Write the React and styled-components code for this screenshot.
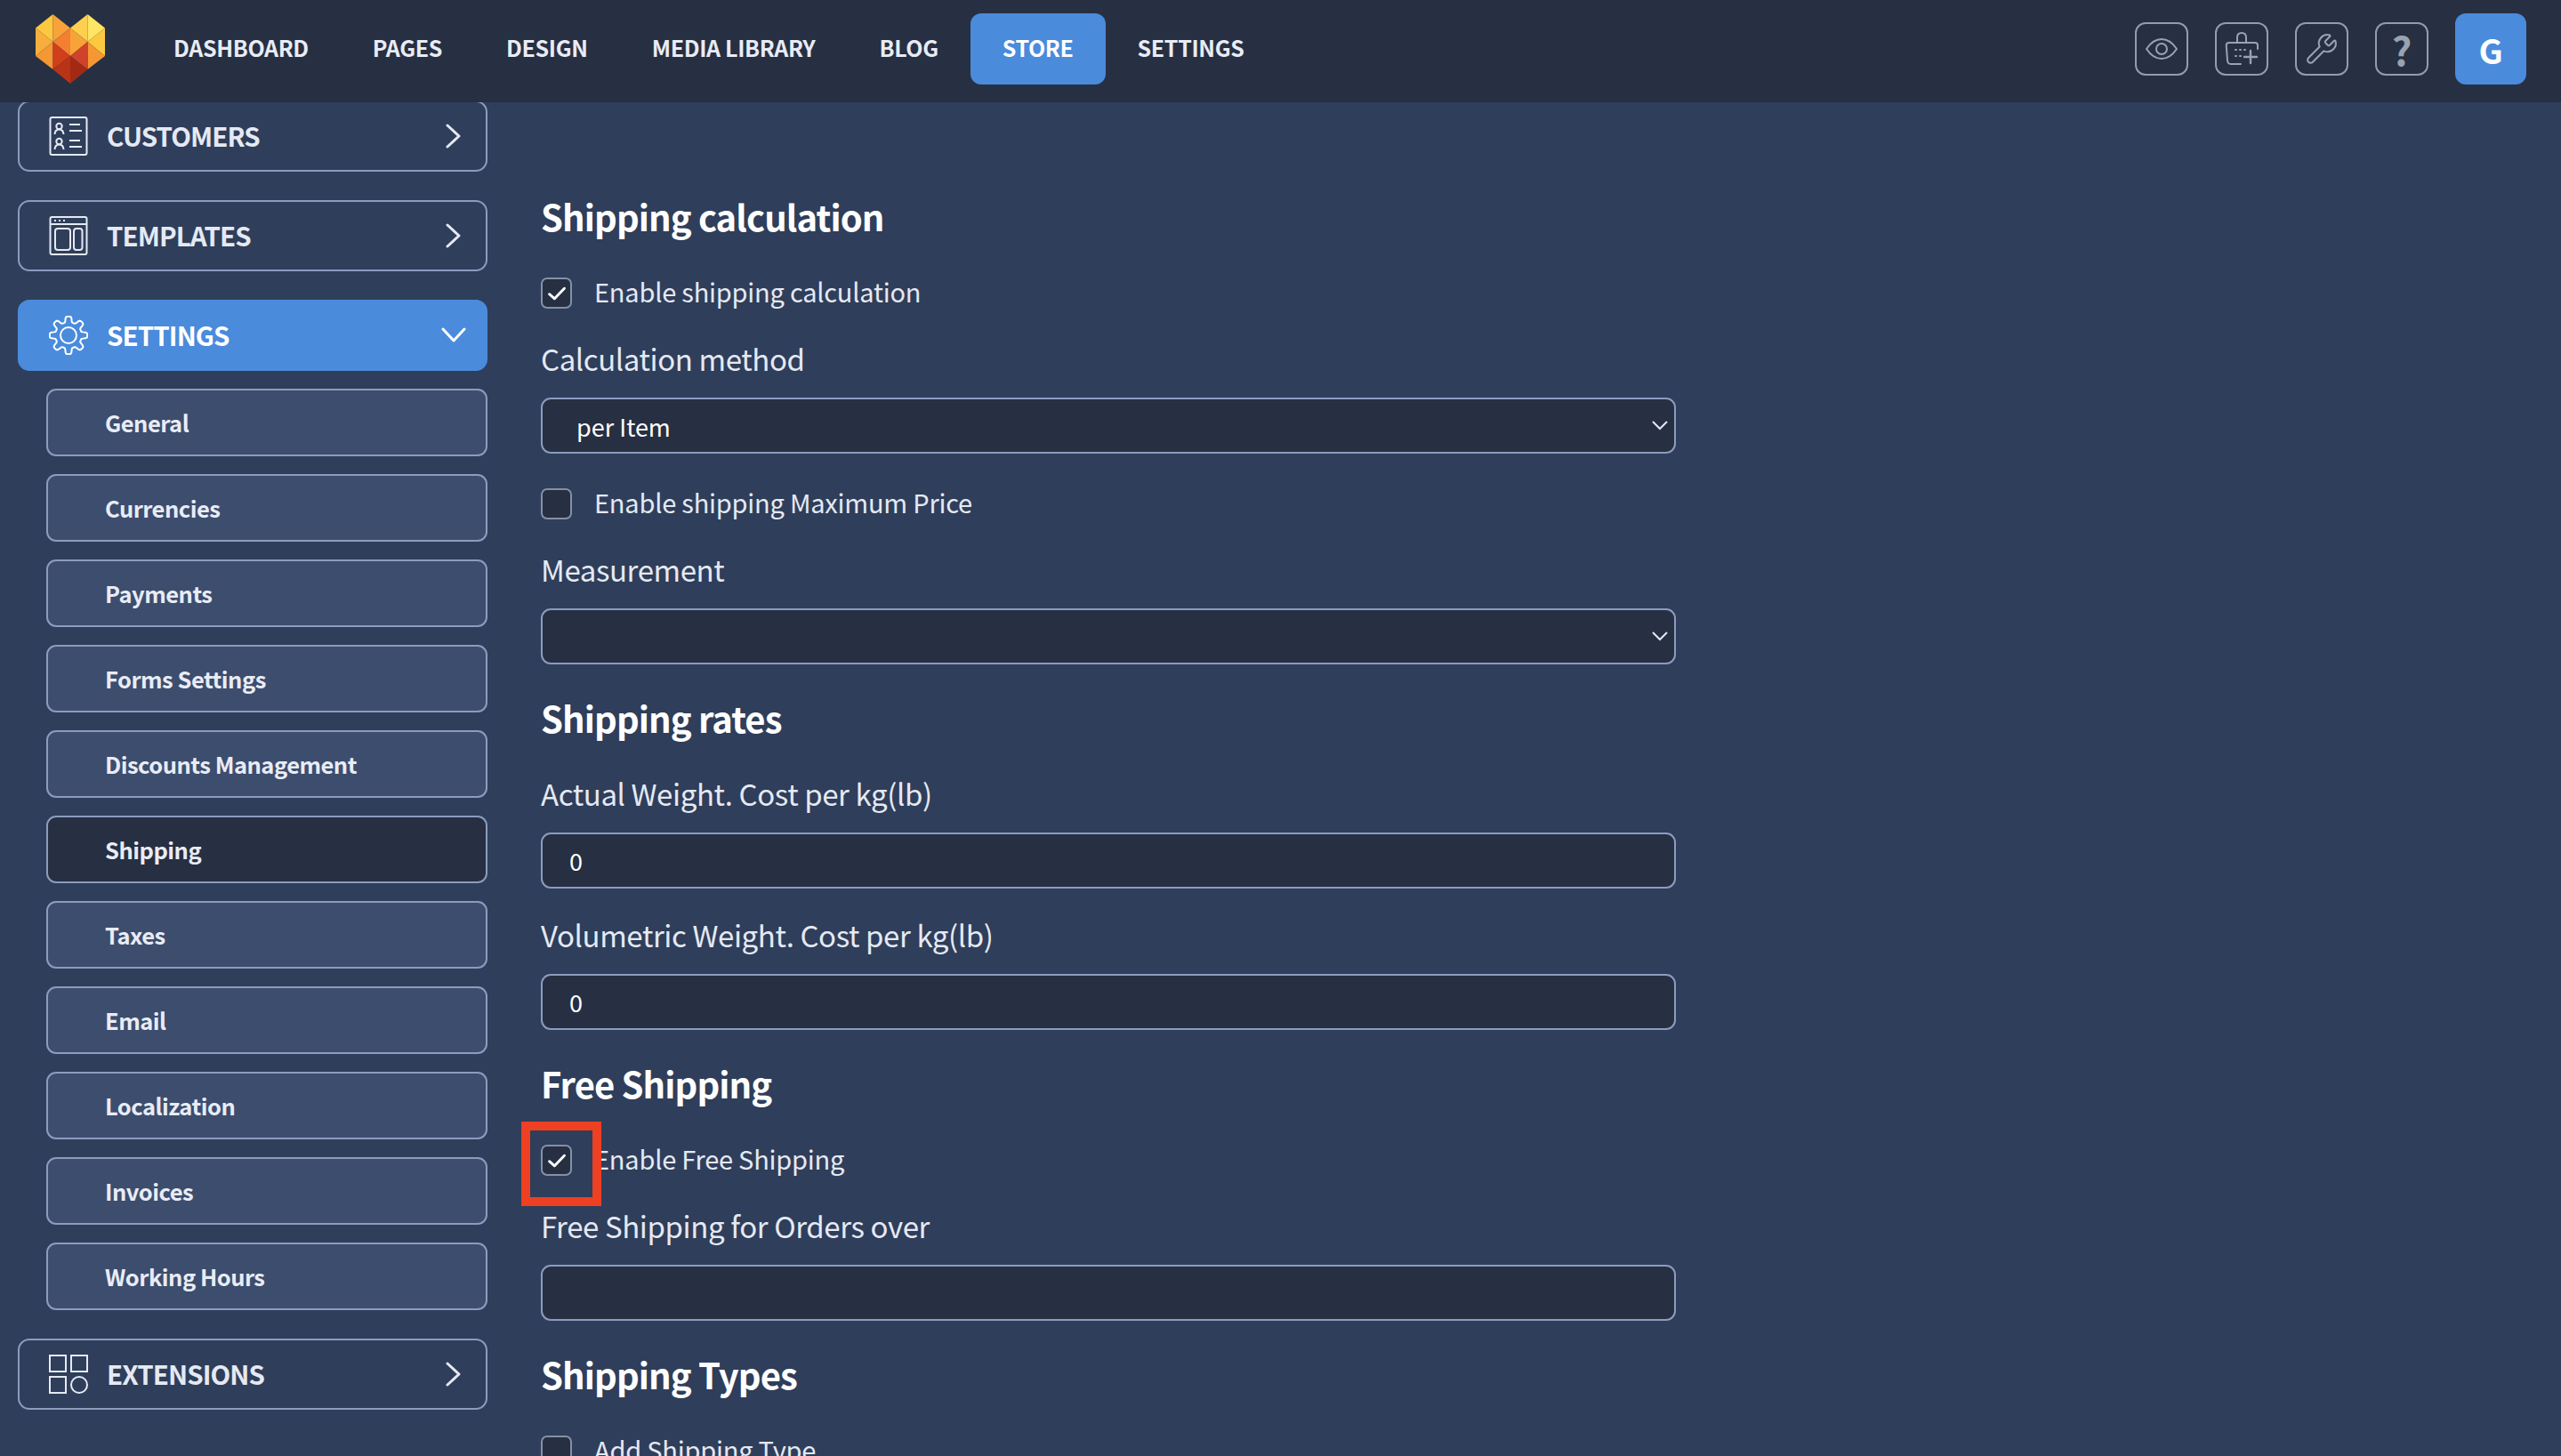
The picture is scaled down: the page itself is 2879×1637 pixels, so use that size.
import styled, { createGlobalStyle } from "styled-components";
import { Wrench } from "lucide-react";

const FONT = `"Noto Sans CJK KR", "Noto Sans", sans-serif`;

const GlobalStyle = createGlobalStyle`
  html, body {
    margin: 0;
    padding: 0;
    background: #2f3e5a;
    font-family: ${FONT};
    overflow: hidden;
  }
  * { box-sizing: border-box; }
`;

const NAV = ["DASHBOARD", "PAGES", "DESIGN", "MEDIA LIBRARY", "BLOG", "STORE", "SETTINGS"];
const SUB = [
  "General", "Currencies", "Payments", "Forms Settings", "Discounts Management",
  "Shipping", "Taxes", "Email", "Localization", "Invoices", "Working Hours",
];

// outline of the gear: eight rounded teeth around the centre
const GEAR_PATH = Array.from({ length: 144 }, (_, i) => {
  const a = (i / 144) * Math.PI * 2;
  const r = 18 + 3.2 * (Math.tanh(2.4 * Math.cos(8 * a)) / Math.tanh(2.4));
  const x = 22 + r * Math.cos(a);
  const y = 22 + r * Math.sin(a);
  return `${i === 0 ? "M" : "L"}${x.toFixed(2)} ${y.toFixed(2)}`;
}).join("") + "Z";

function Logo() {
  return (
    <LogoSvg viewBox="0 0 78 78">
      <polygon points="0,15.5 19.5,0 19.5,31" fill="#fbc840" />
      <polygon points="19.5,0 39,15.5 19.5,31" fill="#f7a339" />
      <polygon points="39,15.5 58.5,0 58.5,31" fill="#fdd04f" />
      <polygon points="58.5,0 78,15.5 58.5,31" fill="#ffe564" />
      <polygon points="0,15.5 19.5,31 0,47" fill="#f8ae3c" />
      <polygon points="0,47 19.5,31 19.5,62" fill="#f59733" />
      <polygon points="19.5,31 39,15.5 39,47" fill="#f47f31" />
      <polygon points="39,15.5 58.5,31 39,47" fill="#f7a339" />
      <polygon points="78,15.5 58.5,31 78,47" fill="#fbc840" />
      <polygon points="78,47 58.5,31 58.5,62" fill="#f59733" />
      <polygon points="19.5,31 39,47 19.5,62" fill="#cf3f1c" />
      <polygon points="58.5,31 39,47 58.5,62" fill="#d0432b" />
      <polygon points="19.5,62 39,47 39,78" fill="#b93417" />
      <polygon points="58.5,62 39,47 39,78" fill="#a22a15" />
    </LogoSvg>
  );
}

function Chevron({ down }) {
  return (
    <ChevronSvg viewBox="0 0 20 30" $down={down}>
      <path d="M3 3l13 12-13 12" />
    </ChevronSvg>
  );
}

function CustomersIcon() {
  return (
    <SideIcon viewBox="0 0 44 44">
      <rect x="1.500" y="1" width="41" height="42" rx="2" />
      <circle cx="11.500" cy="11" r="3.200" />
      <path d="M6.500 20c.3-3.500 2-5.500 5-5.500s4.700 2 5 5.500M23 9h12M23 16h14" />
      <circle cx="11.500" cy="28" r="3.200" />
      <path d="M6.500 37c.3-3.500 2-5.500 5-5.500s4.700 2 5 5.500M23 27h12M23 34h14" />
    </SideIcon>
  );
}

function TemplatesIcon() {
  return (
    <SideIcon viewBox="0 0 44 44">
      <rect x="1.500" y="1" width="41" height="42" rx="2" />
      <path d="M1.500 9h41M6 5h2M11 5h2M16 5h2" />
      <rect x="7" y="14" width="17" height="24" rx="3" />
      <rect x="28" y="14" width="9.500" height="24" rx="3" />
    </SideIcon>
  );
}

function GearIcon() {
  return (
    <SideIcon viewBox="0 0 44 44">
      <circle cx="22" cy="22" r="9" />
      <path d={GEAR_PATH} strokeLinejoin="round" />
    </SideIcon>
  );
}

function ExtensionsIcon() {
  return (
    <SideIcon viewBox="0 0 44 44">
      <rect x="1" y="1" width="18" height="18" />
      <rect x="25" y="1" width="18" height="18" />
      <rect x="1" y="25" width="18" height="18" />
      <circle cx="34" cy="34" r="9" />
    </SideIcon>
  );
}

function EyeIcon() {
  return (
    <TopSvg viewBox="0 0 40 40">
      <path d="M3 20c5-7.500 10.500-11 17-11s12 3.500 17 11c-5 7.500-10.500 11-17 11S8 27.500 3 20z" />
      <circle cx="20" cy="20" r="6" />
    </TopSvg>
  );
}

function BagIcon() {
  return (
    <TopSvg viewBox="0 0 40 40">
      <path d="M38 20v-4c0-2-1-3-3-3H6c-2 0-3.300 1-3.300 3l1.300 17c.2 3 2 4 4 4h11" />
      <path d="M15 13V7c0-3 2-5 5-5s5 2 5 5v6" />
      <path d="M30 22v14M23 29h14" strokeWidth="2.400" />
      <path d="M13 21h1M18 21h1M23 21h1M13 28h1M18 28h1" />
    </TopSvg>
  );
}

function Check() {
  return (
    <CheckSvg viewBox="0 0 20 20">
      <path d="M3.500 10.500l4.500 4L16.500 5.500" />
    </CheckSvg>
  );
}

function CheckField({ checked, marked, children }) {
  return (
    <CheckRow>
      <CheckBox>{checked && <Check />}</CheckBox>
      <CheckLabel>{children}</CheckLabel>
      {marked && <Marker />}
    </CheckRow>
  );
}

function SelectField({ label, value, options }) {
  return (
    <Field>
      <FieldLabel>{label}</FieldLabel>
      <SelectWrap>
        <Select defaultValue={value}>
          {options.map((o) => <option key={o}>{o}</option>)}
        </Select>
        <SelectArrow viewBox="0 0 20 12"><path d="M2 2l8 8 8-8" /></SelectArrow>
      </SelectWrap>
    </Field>
  );
}

function InputField({ label, value }) {
  return (
    <Field>
      <FieldLabel>{label}</FieldLabel>
      <Input defaultValue={value} />
    </Field>
  );
}

export default function App() {
  return (
    <Page>
      <GlobalStyle />
      <TopBar>
        <Logo />
        <Nav>
          {NAV.map((n) => <NavItem key={n} $active={n === "STORE"}>{n}</NavItem>)}
        </Nav>
        <TopActions>
          <TopButton><EyeIcon /></TopButton>
          <TopButton><BagIcon /></TopButton>
          <TopButton><Wrench size={38} strokeWidth={1.3} color="#98a3b1" /></TopButton>
          <TopButton><Question>?</Question></TopButton>
          <Avatar>G</Avatar>
        </TopActions>
      </TopBar>
      <Body>
        <Sidebar>
          <MainItem><CustomersIcon /><MainLabel>CUSTOMERS</MainLabel><Chevron /></MainItem>
          <MainItem><TemplatesIcon /><MainLabel>TEMPLATES</MainLabel><Chevron /></MainItem>
          <MainItem $open><GearIcon /><MainLabel>SETTINGS</MainLabel><Chevron down /></MainItem>
          <SubList>
            {SUB.map((s) => <SubItem key={s} $active={s === "Shipping"}>{s}</SubItem>)}
          </SubList>
          <MainItem><ExtensionsIcon /><MainLabel>EXTENSIONS</MainLabel><Chevron /></MainItem>
        </Sidebar>
        <Content>
          <Heading>Shipping calculation</Heading>
          <CheckField checked>Enable shipping calculation</CheckField>
          <SelectField label="Calculation method" value="per Item" options={["per Item", "per Order"]} />
          <CheckField>Enable shipping Maximum Price</CheckField>
          <SelectField label="Measurement" value="" options={["", "Weight", "Volume"]} />
          <Heading>Shipping rates</Heading>
          <InputField label="Actual Weight. Cost per kg(lb)" value="0" />
          <InputField label="Volumetric Weight. Cost per kg(lb)" value="0" />
          <Heading>Free Shipping</Heading>
          <CheckField checked marked>Enable Free Shipping</CheckField>
          <InputField label="Free Shipping for Orders over" value="" />
          <Heading>Shipping Types</Heading>
          <CheckField>Add Shipping Type</CheckField>
        </Content>
      </Body>
    </Page>
  );
}

const Page = styled.div`
  width: 2879px;
  height: 1637px;
  overflow: hidden;
  background: #2f3e5a;
  display: flex;
  flex-direction: column;
`;

const TopBar = styled.header`
  position: relative;
  z-index: 2;
  flex: none;
  height: 115px;
  background: #272f42;
  display: flex;
  align-items: center;
  padding: 0 39px 5px 40px;
`;

const LogoSvg = styled.svg`
  width: 78px;
  height: 78px;
  flex: none;
`;

const Nav = styled.nav`
  display: flex;
  margin-left: 41px;
`;

const NavItem = styled.a`
  height: 80px;
  padding: 0 36px 4px;
  display: flex;
  align-items: center;
  border-radius: 12px;
  font-size: 25px;
  font-weight: 600;
  letter-spacing: -0.35px;
  color: ${(p) => (p.$active ? "#ffffff" : "#e8ecf5")};
  background: ${(p) => (p.$active ? "#4a8bdc" : "transparent")};
`;

const TopActions = styled.div`
  margin-left: auto;
  display: flex;
  align-items: center;
  gap: 30px;
`;

const TopButton = styled.button`
  width: 60px;
  height: 60px;
  padding: 0;
  border: 2px solid #939daa;
  border-radius: 12px;
  background: transparent;
  display: flex;
  align-items: center;
  justify-content: center;
`;

const TopSvg = styled.svg`
  width: 40px;
  height: 40px;
  fill: none;
  stroke: #98a3b1;
  stroke-width: 2;
  stroke-linecap: round;
`;

const Question = styled.span`
  font-family: ${FONT};
  font-size: 44px;
  font-weight: 700;
  line-height: 1;
  color: #98a3b1;
`;

const Avatar = styled.div`
  width: 80px;
  height: 80px;
  border-radius: 12px;
  background: #4a8bdc;
  color: #fff;
  font-size: 38px;
  font-weight: 700;
  display: flex;
  align-items: center;
  justify-content: center;
`;

const Body = styled.div`
  flex: 1;
  display: flex;
  min-height: 0;
`;

const Sidebar = styled.aside`
  flex: none;
  width: 528px;
  margin: -2px 0 0 20px;
  display: flex;
  flex-direction: column;
  gap: 32px;
`;

const MainItem = styled.div`
  flex: none;
  height: 80px;
  padding: 0 26px 0 33px;
  display: flex;
  align-items: center;
  gap: 21px;
  border-radius: 13px;
  border: 2px solid ${(p) => (p.$open ? "#4a8bdc" : "#8c9cbf")};
  background: ${(p) => (p.$open ? "#4a8bdc" : "transparent")};
  color: ${(p) => (p.$open ? "#ffffff" : "#e5e9f3")};
`;

const SideIcon = styled.svg`
  width: 44px;
  height: 44px;
  flex: none;
  fill: none;
  stroke: currentColor;
  stroke-width: 2;
`;

const MainLabel = styled.span`
  flex: 1;
  padding-bottom: 2px;
  font-size: 29.5px;
  font-weight: 600;
  letter-spacing: -0.9px;
`;

const ChevronSvg = styled.svg`
  width: 20px;
  height: 30px;
  flex: none;
  fill: none;
  stroke: currentColor;
  stroke-width: 3;
  stroke-linecap: round;
  stroke-linejoin: round;
  transform: ${(p) => (p.$down ? "rotate(90deg)" : "none")};
`;

const SubList = styled.div`
  margin: -12px 0 0 32px;
  display: flex;
  flex-direction: column;
  gap: 20px;
`;

const SubItem = styled.div`
  height: 76px;
  padding: 0 0 2px 64px;
  display: flex;
  align-items: center;
  border-radius: 11px;
  border: 2px solid #8c9cbf;
  background: ${(p) => (p.$active ? "#272f42" : "#3d4d6e")};
  color: #e8ecf5;
  font-size: 25.5px;
  font-weight: 600;
  letter-spacing: -0.5px;
`;

const Content = styled.main`
  flex: none;
  width: 1276px;
  margin-left: 60px;
  padding-top: 99px;
`;

const Heading = styled.h2`
  margin: 0 0 40px;
  font-size: 40px;
  line-height: 58px;
  font-weight: 700;
  letter-spacing: -0.9px;
  color: #ffffff;
`;

const Field = styled.div`
  margin-bottom: 31px;
  ${Heading} + & { margin-top: -5px; }
`;

const CheckRow = styled.label`
  position: relative;
  display: flex;
  align-items: center;
  gap: 25px;
  height: 35px;
  margin-bottom: 35px;
  ${Field} + & { margin-top: 39px; }
`;

const CheckBox = styled.span`
  flex: none;
  width: 35px;
  height: 35px;
  border: 2px solid #8491a5;
  border-radius: 7px;
  background: #272f42;
  display: flex;
  align-items: center;
  justify-content: center;
`;

const CheckSvg = styled.svg`
  width: 26px;
  height: 26px;
  fill: none;
  stroke: #ffffff;
  stroke-width: 2.200;
  stroke-linecap: round;
  stroke-linejoin: round;
`;

const CheckLabel = styled.span`
  padding-bottom: 5px;
  font-size: 29px;
  letter-spacing: -0.22px;
  color: #e5e9f3;
`;

const Marker = styled.span`
  position: absolute;
  left: -22px;
  top: -26px;
  width: 90px;
  height: 95px;
  border: 10px solid #ee4022;
`;

const FieldLabel = styled.div`
  margin-bottom: 23px;
  font-size: 33px;
  line-height: 42px;
  letter-spacing: -0.4px;
  color: #e5e9f3;
`;

const controlStyle = `
  display: block;
  width: 100%;
  height: 63px;
  padding: 0 40px 0 30px;
  border: 2px solid #8c9cbf;
  border-radius: 11px;
  background: #272f42;
  color: #ffffff;
  font-family: ${FONT};
  font-size: 27px;
  outline: none;
`;

const Input = styled.input`
  ${controlStyle}
`;

const SelectWrap = styled.div`
  position: relative;
`;

const Select = styled.select`
  ${controlStyle}
  padding-left: 38px;
  padding-top: 2px;
  appearance: none;
`;

const SelectArrow = styled.svg`
  position: absolute;
  right: 8px;
  top: 25px;
  width: 20px;
  height: 12px;
  fill: none;
  stroke: #e5e9f3;
  stroke-width: 2;
  pointer-events: none;
`;
